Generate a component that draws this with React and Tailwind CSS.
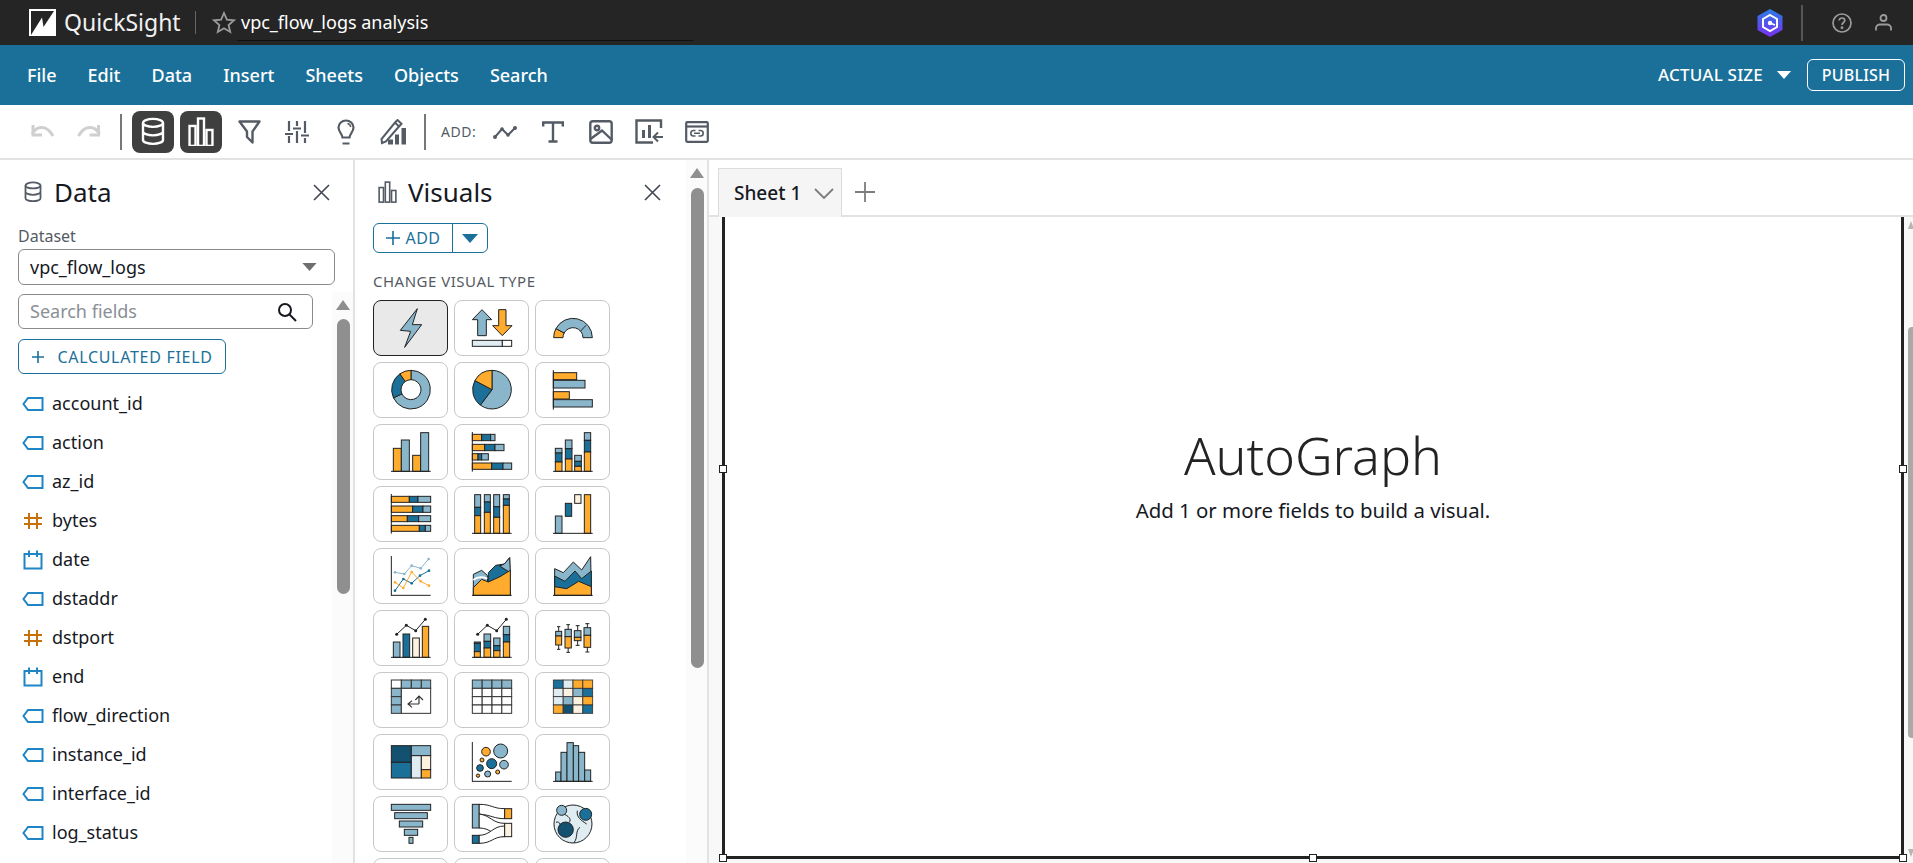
import React from "react";

const O = "#ffab2d", L = "#8ab6cc", D = "#1a7099", K = "#14506f", C = "#fdf1e0", P = "#dfecf2", W = "#ffffff", S = "#222222";

const polar = (cx, cy, r, a) => {
  const t = ((a - 90) * Math.PI) / 180;
  return [cx + r * Math.cos(t), cy + r * Math.sin(t)];
};
const sector = (cx, cy, r0, r1, a0, a1) => {
  const [x1, y1] = polar(cx, cy, r1, a0);
  const [x2, y2] = polar(cx, cy, r1, a1);
  const large = a1 - a0 > 180 ? 1 : 0;
  if (r0 === 0) return `M${cx} ${cy}L${x1} ${y1}A${r1} ${r1} 0 ${large} 1 ${x2} ${y2}Z`;
  const [x3, y3] = polar(cx, cy, r0, a1);
  const [x4, y4] = polar(cx, cy, r0, a0);
  return `M${x1} ${y1}A${r1} ${r1} 0 ${large} 1 ${x2} ${y2}L${x3} ${y3}A${r0} ${r0} 0 ${large} 0 ${x4} ${y4}Z`;
};

const R = ({ x, y, w, h, f }) => <rect x={x} y={y} width={w} height={h} fill={f} stroke={S} strokeWidth="3" />;
const Axis = ({ v = false, y = 118 }) => (
  <>
    {v && <path d={`M0 0V${y + 1}`} stroke={S} strokeWidth="3" />}
    <path d={`M-1 ${y}H118`} stroke={S} strokeWidth="3" />
  </>
);
const Line = ({ pts, c, r = 4, w = 3 }) => (
  <>
    <polyline points={pts.map((p) => p.join(",")).join(" ")} fill="none" stroke={c} strokeWidth={w} />
    {pts.map((p, i) => <circle key={i} cx={p[0]} cy={p[1]} r={r} fill={c} />)}
  </>
);
const HStack = ({ rows }) =>
  rows.map(([y0, y1, segs], i) => (
    <g key={i}>
      {segs.map(([a, b, f], j) => <R key={j} x={a} y={y0} w={b - a} h={y1 - y0} f={f} />)}
    </g>
  ));
const VStack = ({ cols }) =>
  cols.map(([x0, x1, segs], i) => (
    <g key={i}>
      {segs.map(([a, b, f], j) => <R key={j} x={x0} y={a} w={x1 - x0} h={b - a} f={f} />)}
    </g>
  ));
const ComboLine = () => <Line pts={[[16, 49], [45, 22], [73, 38], [102, 4]]} c={S} r={4.5} />;

const chartIcons = [
  <polygon points="78,2 27,67 58,70 40,118 91,50 63,50" fill={L} stroke={S} strokeWidth="3" strokeLinejoin="round" />,
  <>
    <polygon points="29,5 58,35 42,35 42,83 16,83 16,35 0,35" fill={L} stroke={S} strokeWidth="3" />
    <polygon points="79,5 101,5 101,53 119,53 90,83 61,53 79,53" fill={O} stroke={S} strokeWidth="3" />
    <R x={0} y={97} w={90} h={18} f={P} />
    <R x={90} y={97} w={28} h={18} f={W} />
  </>,
  <>
    <path d={sector(59, 89, 30, 58, -90, -62)} fill={O} stroke={S} strokeWidth="3" />
    <path d={sector(59, 89, 30, 58, -62, 90)} fill={L} stroke={S} strokeWidth="3" />
    <path d="M81 70L98 52" stroke={S} strokeWidth="3" />
  </>,
  <>
    <path d={sector(59, 59, 30, 58, 0, 245)} fill={L} stroke={S} strokeWidth="3" />
    <path d={sector(59, 59, 30, 58, 245, 325)} fill={D} stroke={S} strokeWidth="3" />
    <path d={sector(59, 59, 30, 58, 325, 360)} fill={O} stroke={S} strokeWidth="3" />
  </>,
  <>
    <path d={sector(59, 59, 0, 58, 0, 217)} fill={L} stroke={S} strokeWidth="3" />
    <path d={sector(59, 59, 0, 58, 217, 298)} fill={D} stroke={S} strokeWidth="3" />
    <path d={sector(59, 59, 0, 58, 298, 360)} fill={O} stroke={S} strokeWidth="3" />
  </>,
  <>
    <R x={0} y={8} w={70} h={21} f={O} />
    <R x={0} y={31} w={95} h={23} f={L} />
    <R x={0} y={65} w={48} h={22} f={O} />
    <R x={0} y={89} w={117} h={22} f={L} />
    <path d="M0 0V119" stroke={S} strokeWidth="3" />
  </>,
  <>
    <R x={6} y={49} w={24} h={69} f={O} />
    <R x={30} y={24} w={24} h={94} f={L} />
    <R x={64} y={70} w={24} h={48} f={O} />
    <R x={88} y={2} w={24} h={116} f={L} />
    <Axis />
  </>,
  <>
    <HStack rows={[
      [7, 26, [[0, 28, O], [28, 55, D], [55, 68, L]]],
      [37, 56, [[0, 37, O], [37, 68, D], [68, 95, L]]],
      [65, 84, [[0, 17, O], [17, 28, D], [28, 48, L]]],
      [93, 112, [[0, 58, O], [58, 92, D], [92, 118, L]]],
    ]} />
    <path d="M0 0V119" stroke={S} strokeWidth="3" />
  </>,
  <>
    <VStack cols={[
      [6, 26, [[49, 63, L], [63, 90, D], [90, 118, O]]],
      [36, 56, [[24, 50, L], [50, 81, D], [81, 118, O]]],
      [64, 84, [[70, 88, L], [88, 103, D], [103, 118, O]]],
      [93, 112, [[2, 25, L], [25, 60, D], [60, 118, O]]],
    ]} />
    <Axis />
  </>,
  <>
    <HStack rows={[
      [7, 25, [[0, 54, O], [54, 80, D], [80, 118, L]]],
      [36, 55, [[0, 64, O], [64, 95, D], [95, 118, L]]],
      [65, 83, [[0, 48, O], [48, 82, D], [82, 118, L]]],
      [94, 112, [[0, 84, O], [84, 102, D], [102, 118, L]]],
    ]} />
    <path d="M0 0V119" stroke={S} strokeWidth="3" />
  </>,
  <>
    <VStack cols={[
      [7, 25, [[2, 40, L], [40, 65, D], [65, 118, O]]],
      [36, 54, [[2, 24, L], [24, 55, D], [55, 118, O]]],
      [64, 82, [[2, 38, L], [38, 70, D], [70, 118, O]]],
      [93, 111, [[2, 15, L], [15, 34, D], [34, 118, O]]],
    ]} />
    <Axis />
  </>,
  <>
    <R x={6} y={66} w={20} h={52} f={L} />
    <R x={36} y={28} w={19} h={39} f={D} />
    <R x={64} y={2} w={19} h={26} f={C} />
    <R x={93} y={2} w={19} h={116} f={O} />
    <Axis />
  </>,
  <>
    <Line pts={[[11, 49], [39, 54], [61, 29], [88, 37], [112, 9]]} c={L} />
    <Line pts={[[11, 104], [36, 69], [61, 82], [86, 59], [113, 44]]} c={D} />
    <Line pts={[[11, 79], [36, 96], [61, 48], [88, 76], [113, 89]]} c={O} />
    <Axis v />
  </>,
  <>
    <polygon points="3,55 28,43 45,58 47,118 3,118" fill={L} stroke={S} strokeWidth="3" />
    <polygon points="48,50 70,28 96,24 112,5 114,118 48,118" fill={D} stroke={S} strokeWidth="3" />
    <polygon points="82,30 96,24 112,5 114,50" fill={L} stroke={S} strokeWidth="3" />
    <polygon points="3,95 28,70 48,78 83,62 114,43 114,118 3,118" fill={O} stroke={S} strokeWidth="3" />
    <path d="M3 72C15 62 30 62 45 68" fill="none" stroke={W} strokeWidth="6" />
    <Axis />
  </>,
  <>
    <polygon points="4,38 30,50 60,18 85,42 112,2 114,118 4,118" fill={L} stroke={S} strokeWidth="3" />
    <polygon points="4,60 35,76 65,45 85,68 114,45 114,118 4,118" fill={D} stroke={S} strokeWidth="3" />
    <polygon points="4,92 40,98 76,76 114,92 114,118 4,118" fill={O} stroke={S} strokeWidth="3" />
    <Axis />
  </>,
  <>
    <R x={6} y={72} w={20} h={46} f={L} />
    <R x={35} y={48} w={20} h={70} f={D} />
    <R x={64} y={60} w={20} h={58} f={C} />
    <R x={93} y={25} w={19} h={93} f={O} />
    <ComboLine />
    <Axis />
  </>,
  <>
    <VStack cols={[
      [6, 24, [[72, 76, L], [76, 101, D], [101, 118, O]]],
      [35, 55, [[48, 70, L], [70, 90, D], [90, 118, O]]],
      [64, 83, [[60, 83, L], [83, 98, D], [98, 118, O]]],
      [93, 112, [[25, 50, L], [50, 72, D], [72, 118, O]]],
    ]} />
    <ComboLine />
    <Axis />
  </>,
  <>
    {[
      [7, 25, 26, 94, 40, 54, 81],
      [35, 54, 20, 103, 34, 56, 90],
      [63, 83, 23, 82, 38, 58, 68],
      [92, 112, 17, 102, 29, 52, 88],
    ].map(([a, b, w0, w1, t, m, e], i) => (
      <g key={i}>
        <path d={`M${(a + b) / 2} ${w0}V${w1}M${a + 4} ${w0}H${b - 4}M${a + 4} ${w1}H${b - 4}`} stroke={S} strokeWidth="3" />
        <R x={a} y={t} w={b - a} h={m - t} f={L} />
        <R x={a} y={m} w={b - a} h={e - m} f={O} />
      </g>
    ))}
  </>,
  <>
    {[0, 1, 2, 3].map((r) =>
      [0, 1, 2, 3].map((c) =>
        r === 0 || c === 0 ? (
          <rect key={`${r}${c}`} x={c * 30 + 0} y={r * 25} width={c === 3 ? 28 : 30} height="25" fill={r === 0 && c === 0 ? W : L} stroke="#333" strokeWidth="3" />
        ) : null
      )
    )}
    <rect x="30" y="25" width="88" height="75" fill={W} stroke="#333" strokeWidth="3" />
    <path d="M83 72V52M72 60L83 48L95 60M83 72H52M62 62L50 72L62 82" fill="none" stroke="#333" strokeWidth="3.5" />
  </>,
  <>
    {[0, 1, 2, 3].map((r) =>
      [0, 1, 2, 3].map((c) => (
        <rect key={`${r}${c}`} x={c * 29.5} y={r * 25} width="29.5" height="25" fill={r === 0 ? L : W} stroke="#333" strokeWidth="3" />
      ))
    )}
  </>,
  <>
    {[
      [D, P, O, O],
      [P, C, L, D],
      [P, L, C, O],
      [O, K, C, D],
    ].map((row, r) =>
      row.map((f, c) => (
        <rect key={`${r}${c}`} x={c * 29.5} y={r * 25} width="29.5" height="25" fill={f} stroke="#333" strokeWidth="2.5" />
      ))
    )}
  </>,
  <>
    <R x={0} y={11} w={60} h={50} f={K} />
    <R x={0} y={61} w={60} h={47} f={D} />
    <R x={60} y={11} w={58} h={30} f={L} />
    <R x={60} y={41} w={30} h={67} f={P} />
    <R x={90} y={41} w={28} h={42} f={C} />
    <R x={90} y={83} w={28} h={25} f={O} />
  </>,
  <>
    {[
      [41, 29, 13, O], [85, 27, 21, L], [29, 54, 6, O], [58, 65, 15, D], [95, 68, 13, L],
      [23, 78, 10, D], [46, 96, 9, L], [76, 90, 6, O], [17, 101, 5, O],
    ].map(([x, y, r, f], i) => <circle key={i} cx={x} cy={y} r={r} fill={f} stroke={S} strokeWidth="3" />)}
    <Axis v />
  </>,
  <>
    {[[7, 23, 90], [23, 41, 31], [41, 60, 2], [60, 76, 11], [76, 94, 31], [94, 112, 84]].map(([a, b, t], i) => (
      <R key={i} x={a} y={t} w={b - a} h={118 - t} f={L} />
    ))}
    <Axis />
  </>,
  <>
    {[[0, 118, 1], [10, 98, 26], [24, 70, 51], [39, 40, 76], [53, 12, 100]].map(([x, w, y], i) => (
      <R key={i} x={x} y={y} w={w} h="18" f={L} />
    ))}
  </>,
  <>
    <path d="M20 1C60 1 60 14 97 14V44C65 44 60 34 20 30Z" fill={W} stroke={S} strokeWidth="3" />
    <path d="M20 30C55 34 60 58 97 58V98C60 98 60 72 20 72Z" fill={W} stroke={S} strokeWidth="3" />
    <path d="M20 94C55 94 60 66 97 66V98C60 98 60 118 20 118Z" fill={W} stroke={S} strokeWidth="3" />
    <R x={0} y={1} w={20} h={71} f={L} />
    <R x={0} y={94} w={20} h={24} f={D} />
    <R x={97} y={14} w={21} h={30} f={O} />
    <R x={97} y={58} w={21} h={40} f={C} />
  </>,
  <>
    <circle cx="59" cy="60" r="57" fill={P} stroke={S} strokeWidth="3" />
    <path d="M30 30C45 35 55 45 48 55M72 20C68 40 85 50 100 60M80 70C65 80 75 100 62 116M8 55C20 50 25 65 20 80" fill="none" stroke={S} strokeWidth="3" />
    <circle cx="25" cy="19" r="15" fill={L} stroke={S} strokeWidth="3" />
    <circle cx="97" cy="31" r="18" fill={D} stroke={S} strokeWidth="3" />
    <circle cx="37" cy="77" r="23" fill={K} stroke={S} strokeWidth="3" />
  </>,
  null, null, null,
];

function Tile({ children, active }) {
  return (
    <div className={`w-[75px] h-[56px] rounded-lg border flex items-center justify-center ${active ? "bg-[#e9e9e9] border-[#222]" : "bg-white border-[#c8c8c8]"}`}>
      {children && (
        <svg width="40" height="40" viewBox="0 0 118 120" className="overflow-visible">{children}</svg>
      )}
    </div>
  );
}

const TagIcon = () => (
  <svg width="22" height="14" viewBox="0 0 22 14" fill="none" stroke="#1f85c4" strokeWidth="2">
    <path d="M6 1H20.500V13H6L1.500 7Z" />
  </svg>
);
const HashIcon = () => (
  <svg width="22" height="18" viewBox="0 0 22 18" fill="none" stroke="#c8700a" strokeWidth="2">
    <path d="M7 1V17M15 1V17M2 6H20M2 12H20" />
  </svg>
);
const CalIcon = () => (
  <svg width="22" height="20" viewBox="0 0 22 20" fill="none" stroke="#1f85c4" strokeWidth="2">
    <path d="M2.500 4H19.500V18.500H2.500ZM7 0.500V7M15 0.500V7" />
  </svg>
);

const fields = [
  ["account_id", "t"], ["action", "t"], ["az_id", "t"], ["bytes", "n"], ["date", "d"], ["dstaddr", "t"],
  ["dstport", "n"], ["end", "d"], ["flow_direction", "t"], ["instance_id", "t"], ["interface_id", "t"], ["log_status", "t"],
];

const CloseX = () => (
  <svg width="17" height="17" viewBox="0 0 17 17" stroke="#414750" strokeWidth="1.600" fill="none"><path d="M1 1L16 16M16 1L1 16" /></svg>
);
const Caret = ({ c, w = 16, h = 9 }) => (
  <svg width={w} height={h} viewBox="0 0 16 9" fill={c}><path d="M0 0H16L8 9Z" /></svg>
);
const Cyl = ({ s = 26, c = "#fff", w = 2.4 }) => (
  <svg width={s} height={s * 1.2} viewBox="0 0 24 28" fill="none" stroke={c} strokeWidth={w}>
    <ellipse cx="12" cy="5.500" rx="10" ry="4" />
    <path d="M2 5.500V22.500C2 24.700 6.500 26.500 12 26.500C17.500 26.500 22 24.700 22 22.500V5.500M2 14C2 16.200 6.500 18 12 18C17.500 18 22 16.200 22 14" />
  </svg>
);
const Bars = ({ s = 26, c = "#fff", w = 2.4 }) => (
  <svg width={s} height={s * 1.15} viewBox="0 0 26 30" fill="none" stroke={c} strokeWidth={w}>
    <rect x="1.500" y="9" width="6" height="20" /><rect x="10" y="1.500" width="6" height="27.500" /><rect x="18.500" y="13" width="6" height="16" />
  </svg>
);
const G = "#545b64";

function Toolbar() {
  return (
    <div className="h-[55px] flex items-center border-b-2 border-[#e2e2e2] bg-white shrink-0">
      <svg className="ml-[29px]" width="25" height="17" viewBox="0 0 25 17" fill="none" stroke="#cfcfcf" strokeWidth="3"><path d="M4 2V12H13M3 11C8 2 18 2 24 13" /></svg>
      <svg className="ml-[23px]" width="26" height="17" viewBox="0 0 25 17" fill="none" stroke="#cfcfcf" strokeWidth="3"><path d="M21 2V12H12M22 11C17 2 7 2 1 13" /></svg>
      <div className="ml-[17px] w-[2px] h-[36px] bg-[#777]" />
      <div className="ml-[10px] w-[42px] h-[42px] rounded-lg bg-[#3f3f3f] flex items-center justify-center"><Cyl s={24} /></div>
      <div className="ml-[6px] w-[42px] h-[42px] rounded-lg bg-[#3f3f3f] flex items-center justify-center"><Bars s={26} /></div>
      <svg className="ml-[16px]" width="23" height="24" viewBox="0 0 23 24" fill="none" stroke={G} strokeWidth="2.400" strokeLinejoin="round"><path d="M1.500 1.500H21.500L14.500 11.500V22.500L9 17V11.500Z" /></svg>
      <svg className="ml-[24px]" width="24" height="22" viewBox="0 0 24 22" fill="none" stroke={G} strokeWidth="2.200"><path d="M4 0V10M4 15V22M12 0V5M12 10V22M20 0V12M20 17V22M0 13H8M8 7.500H16M16 14.500H24" /></svg>
      <svg className="ml-[28px]" width="18" height="26" viewBox="0 0 18 26" fill="none" stroke={G} strokeWidth="2.200"><path d="M5.500 18.500C5 14.500 1.500 12.500 1.500 8.500C1.500 4.500 5 1.500 9 1.500C13 1.500 16.500 4.500 16.500 8.500C16.500 12.500 13 14.500 12.500 18.500ZM5.500 24.500H12.500" /><path d="M10.500 4.500C12.300 5 13.500 6.300 13.800 8" strokeWidth="1.500" /></svg>
      <svg className="ml-[25px]" width="27" height="26" viewBox="0 0 27 26" fill="none" stroke={G} strokeWidth="2"><path d="M1.500 20L2 24L6 22.500L19 7.500L15 3.500ZM15 3.500L17.500 1L21.500 4.800L19 7.500" /><path d="M8 25.500V20.500H13V25.500ZM15 25.500V15.500H19V25.500ZM21.500 25.500V9H26V25.500Z" fill={G} stroke="none" /></svg>
      <div className="ml-[17px] w-[2px] h-[36px] bg-[#777]" />
      <span className="ml-[15px] w-[37px] text-[14px] tracking-[0.5px] text-[#545b64]">ADD:</span>
      <svg className="ml-[15px]" width="24" height="14" viewBox="0 0 24 14" fill="none" stroke={G} strokeWidth="2"><path d="M2 12L9 4L15 10L22 3" /><circle cx="2" cy="12" r="2" fill={G} stroke="none" /><circle cx="9" cy="4" r="1.800" fill={G} stroke="none" /><circle cx="15" cy="10" r="1.800" fill={G} stroke="none" /><circle cx="22" cy="3" r="2" fill={G} stroke="none" /></svg>
      <svg className="ml-[25px]" width="22" height="22" viewBox="0 0 22 22" fill="none" stroke={G} strokeWidth="2.400"><path d="M1.200 5.500V1.500H20.800V5.500M11 1.500V20.500M6.500 20.500H15.500" /></svg>
      <svg className="ml-[25px]" width="24" height="24" viewBox="0 0 24 24" fill="none" stroke={G} strokeWidth="2.400"><rect x="1.300" y="1.300" width="21.400" height="21.400" rx="2.500" /><circle cx="8" cy="8" r="2.200" /><path d="M1.500 19L13 10.500L23 20" /></svg>
      <svg className="ml-[22px]" width="29" height="25" viewBox="0 0 29 25" fill="none" stroke={G} strokeWidth="2.400"><path d="M26 9V1.500H1.500V23.500H18" /><path d="M7 19V11H10V19ZM13 19V6H16V19Z" fill={G} stroke="none" /><path d="M28 18H19M23 13.500L18.500 18L23 22.500" strokeWidth="2" /></svg>
      <svg className="ml-[21px]" width="24" height="22" viewBox="0 0 24 22" fill="none" stroke={G} strokeWidth="2.200"><rect x="1.200" y="1.200" width="21.600" height="19.600" rx="1" /><path d="M1.500 5.500H22.500" /><path d="M10.500 9.500H8.500C6.800 9.500 5.800 10.800 5.800 12.300S6.800 15 8.500 15H10.500M13.500 9.500H15.500C17.200 9.500 18.200 10.800 18.200 12.300S17.200 15 15.500 15H13.500M9 12.300H15" strokeWidth="1.600" /></svg>
    </div>
  );
}

function Track({ thumbH, top = 0 }) {
  return (
    <div className="w-[22px] shrink-0 bg-[#fbfbfb] flex flex-col items-center pt-[8px]">
      <svg width="14" height="10" viewBox="0 0 14 10" fill="#8f8f8f"><path d="M7 0L14 10H0Z" /></svg>
      <div style={{ height: thumbH, marginTop: top }} className="w-[13px] rounded-full bg-[#8f8f8f]" />
    </div>
  );
}

function DataPanel() {
  return (
    <div className="w-[355px] shrink-0 border-r-2 border-[#e2e2e2] flex overflow-hidden">
      <div className="w-[332px] shrink-0 pl-[18px]">
        <div className="h-[66px] flex items-center pb-[2px]">
          <span className="ml-[6px]"><Cyl s={18} c="#545b64" w={2.4} /></span>
          <span className="ml-[12px] text-[26px] text-[#16191f]">Data</span>
          <span className="ml-auto mr-[2px]"><CloseX /></span>
        </div>
        <div className="text-[16px] leading-[20px] text-[#545b64]">Dataset</div>
        <div className="mt-[3px] w-[317px] h-[36px] border border-[#8a8a8a] rounded-md flex items-center pl-[11px] pr-[17px] text-[18px] text-[#16191f]">
          vpc_flow_logs
          <span className="ml-auto"><Caret c="#6f6f6f" w={15} h={8} /></span>
        </div>
        <div className="mt-[9px] w-[295px] h-[35px] border border-[#8a8a8a] rounded-md flex items-center pl-[11px] pr-[15px] text-[18px] text-[#8a8f96]">
          Search fields
          <svg className="ml-auto" width="20" height="20" viewBox="0 0 20 20" fill="none" stroke="#16191f" strokeWidth="2"><circle cx="8" cy="8" r="6" /><path d="M12.500 12.500L19 19" /></svg>
        </div>
        <div className="mt-[10px] w-[208px] h-[35px] border border-[#1a7099] rounded-md flex items-center justify-center gap-[12px] text-[16px] tracking-[0.7px] text-[#1a7099]">
          <svg width="14" height="14" viewBox="0 0 14 14" stroke="#1a7099" strokeWidth="1.600"><path d="M7 1V13M1 7H13" /></svg>
          CALCULATED FIELD
        </div>
        <div className="mt-[10px]">
          {fields.map(([n, t]) => (
            <div key={n} className="h-[39px] flex items-center">
              <span className="w-[30px] ml-[4px] shrink-0">{t === "t" ? <TagIcon /> : t === "n" ? <HashIcon /> : <CalIcon />}</span>
              <span className="text-[18px] text-[#16191f]">{n}</span>
            </div>
          ))}
        </div>
      </div>
      <div className="mt-[132px] flex">
        <Track thumbH={275} top={9} />
      </div>
    </div>
  );
}

function VisualsPanel() {
  return (
    <div className="w-[354px] shrink-0 border-r-2 border-[#e2e2e2] flex overflow-hidden">
      <div className="w-[331px] shrink-0 pl-[18px]">
        <div className="h-[66px] flex items-center pb-[2px]">
          <span className="ml-[5px]"><Bars s={19} c="#545b64" w={2.2} /></span>
          <span className="ml-[11px] text-[26px] text-[#16191f]">Visuals</span>
          <span className="ml-auto mr-[25px]"><CloseX /></span>
        </div>
        <div className="mt-[-3px] flex w-[115px] h-[30px] border border-[#1a7099] rounded-md text-[16px] tracking-[0.4px] text-[#1a7099]">
          <div className="w-[79px] border-r border-[#1a7099] flex items-center justify-center gap-[6px]">
            <svg width="14" height="14" viewBox="0 0 14 14" stroke="#1a7099" strokeWidth="1.600"><path d="M7 0V14M0 7H14" /></svg>
            ADD
          </div>
          <div className="flex-1 flex items-center justify-center"><Caret c="#1a7099" /></div>
        </div>
        <div className="mt-[18px] text-[15px] leading-[20px] tracking-[0.5px] text-[#545b64]">CHANGE VISUAL TYPE</div>
        <div className="mt-[9px] grid grid-cols-[75px_75px_75px] gap-x-[6px] gap-y-[6px]">
          {chartIcons.map((c, i) => <Tile key={i} active={i === 0}>{c}</Tile>)}
        </div>
      </div>
      <Track thumbH={480} top={10} />
    </div>
  );
}

function Handle({ className }) {
  return <div className={`absolute w-[8px] h-[8px] bg-white border border-[#222] ${className}`} />;
}

function SheetArea() {
  return (
    <div className="flex-1 flex flex-col min-w-0">
      <div className="h-[57px] shrink-0 border-b-2 border-[#e2e2e2] flex items-end pl-[9px]">
        <div className="w-[124px] h-[49px] mb-[-2px] bg-[#f5f5f5] border border-b-0 border-[#dcdcdc] flex items-center pl-[15px] text-[19px] font-medium text-[#16191f]">
          Sheet 1
          <svg className="ml-[13px]" width="20" height="11" viewBox="0 0 20 11" fill="none" stroke="#7d7d7d" strokeWidth="1.800"><path d="M1 1L10 10L19 1" /></svg>
        </div>
        <svg className="ml-[13px] mb-[13px]" width="20" height="20" viewBox="0 0 20 20" stroke="#7d7d7d" strokeWidth="1.800"><path d="M10 0V20M0 10H20" /></svg>
      </div>
      <div className="flex-1 flex bg-[#f8f8f8] pl-[13px] min-h-0">
        <div className="relative w-[1182px] h-[642px] bg-white border-x-[3px] border-b-[3px] border-[#222] flex flex-col items-center pt-[208px]">
          <div className="text-[52px] leading-[60px] font-light text-[#232323]">AutoGraph</div>
          <div className="mt-[11px] text-[20.4px] leading-[28px] text-[#16191f]">Add 1 or more fields to build a visual.</div>
          <Handle className="left-[-6px] top-[248px]" />
          <Handle className="right-[-6px] top-[248px]" />
          <Handle className="left-[-6px] bottom-[-6px]" />
          <Handle className="right-[-6px] bottom-[-6px]" />
          <Handle className="left-[584px] bottom-[-6px]" />
        </div>
        <div className="ml-[4px] flex-1 flex flex-col items-center bg-[#f8f8f8] pt-[4px] pb-[6px] overflow-hidden">
          <svg width="6" height="8" viewBox="0 0 6 8" fill="#b5b5b5"><path d="M3 0L6 8H0Z" /></svg>
          <div className="mt-[98px] w-[5px] h-[411px] rounded-l bg-[#a9a9a9] self-end" />
          <svg className="mt-auto" width="6" height="8" viewBox="0 0 6 8" fill="#b5b5b5"><path d="M0 0H6L3 8Z" /></svg>
        </div>
      </div>
    </div>
  );
}

export default function App() {
  return (
    <div className="w-full h-screen overflow-hidden flex flex-col bg-white font-['Noto_Sans',sans-serif]">
      <div className="h-[45px] shrink-0 bg-[#252525] flex items-center text-white">
        <svg className="ml-[29px]" width="27" height="27" viewBox="0 0 27 27"><rect width="27" height="27" fill="#fff" /><path d="M2 2H25L14.500 18L13 8.500L2 26Z" fill="#252525" /></svg>
        <span className="ml-[8px] w-[114px] text-[23px] text-[#f2f2f2]">QuickSight</span>
        <div className="ml-[17px] w-px h-[23px] bg-[#666]" />
        <svg className="ml-[16px]" width="24" height="23" viewBox="0 0 24 23" fill="none" stroke="#9a9a9a" strokeWidth="1.800"><path d="M12 2L14.900 8.600L22 9.300L16.600 14L18.200 21L12 17.300L5.800 21L7.400 14L2 9.300L9.100 8.600Z" /></svg>
        <div className="ml-[1px] w-[456px] h-[37px] border-b border-[#111] pl-[4px] flex items-center text-[18px] text-white">vpc_flow_logs analysis</div>
        <svg className="ml-auto" width="26" height="28" viewBox="0 0 26 28">
          <defs><linearGradient id="hx" x1="0" y1="0" x2="0" y2="1"><stop offset="0" stopColor="#2b7de9" /><stop offset="1" stopColor="#7b2ff0" /></linearGradient></defs>
          <path d="M13 0L25.500 7V21L13 28L0.500 21V7Z" fill="url(#hx)" />
          <path d="M13 6L20 10V18L13 22L6 18V10Z" fill="none" stroke="#fff" strokeWidth="2" />
          <circle cx="13" cy="14" r="2.200" fill="#fff" /><path d="M13 14L18 16" stroke="#fff" strokeWidth="1.500" />
        </svg>
        <div className="ml-[18px] w-[2px] h-[36px] bg-[#555]" />
        <svg className="ml-[29px]" width="20" height="20" viewBox="0 0 20 20" fill="none" stroke="#9c9c9c" strokeWidth="1.700"><circle cx="10" cy="10" r="9" /><path d="M7.200 7.500C7.200 5.900 8.500 5 10 5S12.800 5.900 12.800 7.500C12.800 9.500 10 9.500 10 12" /><circle cx="10" cy="14.800" r="0.600" /></svg>
        <svg className="ml-[23px] mr-[21px]" width="17" height="17" viewBox="0 0 17 17" fill="none" stroke="#9c9c9c" strokeWidth="1.800"><circle cx="8.500" cy="4" r="3" /><path d="M1 16.500V14C1 11.800 3 10.500 5 10.500H12C14 10.500 16 11.800 16 14V16.500" /></svg>
      </div>
      <div className="h-[60px] shrink-0 bg-[#1a7099] flex items-center text-white text-[18px] font-medium">
        <span className="ml-[27px]">File</span>
        <span className="ml-[31px]">Edit</span>
        <span className="ml-[31px]">Data</span>
        <span className="ml-[31px]">Insert</span>
        <span className="ml-[31px]">Sheets</span>
        <span className="ml-[31px]">Objects</span>
        <span className="ml-[31px]">Search</span>
        <span className="ml-auto text-[17px] tracking-[0.2px]">ACTUAL SIZE</span>
        <span className="ml-[13px]"><Caret c="#fff" w={16} h={8} /></span>
        <div className="ml-[15px] mr-[8px] w-[98px] h-[32px] rounded-md border border-white flex items-center justify-center text-[16px] tracking-[0.2px]">PUBLISH</div>
      </div>
      <Toolbar />
      <div className="flex-1 flex min-h-0">
        <DataPanel />
        <VisualsPanel />
        <SheetArea />
      </div>
    </div>
  );
}
